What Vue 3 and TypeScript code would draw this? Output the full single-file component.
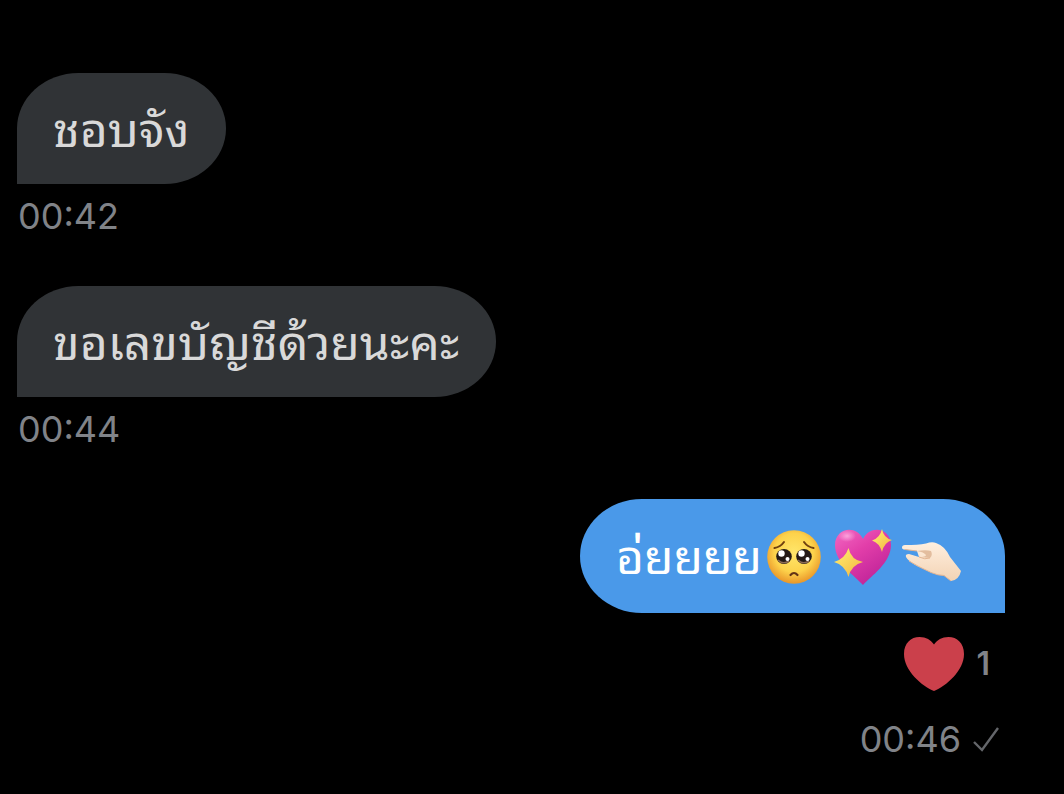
<script setup lang="ts">
interface Message {
  id: number
  text: string
  time: string
  own: boolean
  likes?: number
}

const messages: Message[] = [
  { id: 1, text: 'ชอบจัง', time: '00:42', own: false },
  { id: 2, text: 'ขอเลขบัญชีด้วยนะคะ', time: '00:44', own: false },
  { id: 3, text: 'อ่ยยยย', time: '00:46', own: true, likes: 1 },
]
</script>

<template>
  <main class="chat">
    <article v-for="m in messages" :key="m.id" class="message" :class="{ own: m.own }">
      <div class="bubble">
        <span class="text">{{ m.text }}</span>
        <span v-if="m.own" class="emojis">
          <svg class="emoji" viewBox="0 0 60 60" role="img" aria-label="Pleading face">
            <defs>
              <radialGradient id="skin" cx=".5" cy=".42" r=".56">
                <stop offset="0" stop-color="#ffe66a" />
                <stop offset=".65" stop-color="#fdd24b" />
                <stop offset="1" stop-color="#eb9b2c" />
              </radialGradient>
            </defs>
            <circle cx="30" cy="30" r="26.8" fill="url(#skin)" />
            <ellipse cx="20" cy="29.5" rx="7.8" ry="7.6" fill="#241a17" />
            <ellipse cx="40" cy="29.5" rx="7.8" ry="7.6" fill="#241a17" />
            <path d="M14 33q5 5 11 1M34 33q5 5 11 1" fill="none" stroke="#8c6b55" stroke-width="1.6" />
            <g fill="#fff">
              <circle cx="17.5" cy="26.5" r="3.2" /><circle cx="37.5" cy="26.5" r="3.2" />
              <circle cx="23.5" cy="32" r="2" /><circle cx="43.5" cy="32" r="2" />
            </g>
            <path d="M10.500 21q6-1 9.500-6M49.500 21q-6-1-9.500-6" fill="none" stroke="#70400f" stroke-width="2" stroke-linecap="round" />
            <path d="M26.500 48q3.500-4 7 0" fill="none" stroke="#633316" stroke-width="2.200" stroke-linecap="round" />
          </svg>
          <svg class="emoji" viewBox="0 0 60 60" role="img" aria-label="Sparkling heart">
            <defs>
              <linearGradient id="pink" x1="0" y1="0" x2=".7" y2="1">
                <stop offset="0" stop-color="#f269c3" />
                <stop offset=".45" stop-color="#e23ea9" />
                <stop offset="1" stop-color="#bd2298" />
              </linearGradient>
              <radialGradient id="shine">
                <stop offset="0" stop-color="#ffb5e5" stop-opacity=".8" />
                <stop offset="1" stop-color="#ffb5e5" stop-opacity="0" />
              </radialGradient>
              <linearGradient id="gold" x1="0" y1="0" x2="1" y2="1">
                <stop offset="0" stop-color="#fff173" />
                <stop offset="1" stop-color="#f3b43e" />
              </linearGradient>
            </defs>
            <path d="M30 58C22 49 2 36 2 18C2 1 23-3 30 12C37-3 58 1 58 18C58 36 38 49 30 58Z" fill="url(#pink)" />
            <ellipse cx="14" cy="9" rx="9" ry="6" fill="url(#shine)" />
            <path d="M15.500 21Q18 33 30 35Q18 38 15.500 50Q12 38 1 35Q12 32 15.500 21Z" fill="url(#gold)" />
            <path d="M49 2Q50.500 11 59 13Q51 15.500 49 25Q46.500 16 39 13.500Q47 11 49 2Z" fill="url(#gold)" />
          </svg>
          <svg class="emoji" viewBox="0 0 60 60" role="img" aria-label="Pinching hand">
            <defs>
              <linearGradient id="hand" x1="0" y1="0" x2="0" y2="1">
                <stop offset="0" stop-color="#ffefdf" />
                <stop offset="1" stop-color="#f3d3b4" />
              </linearGradient>
            </defs>
            <path d="M3 18Q0 18 0 20.500Q0 22.500 3 22.500L15 24L17 30L7 27Q3 27 4 30Q6 34 15 39L29 45.500Q36 48.500 42 48.500L49 54Q57 53 59 44L48 30Q43 19 34 16Q30 14.500 24 16.500Q16 18 3 18Z" fill="url(#hand)" />
            <path d="M15 24Q24 22.500 29 24Q31 28 28 31L17 30Q24 30 24 28Q22 25 15 24Z" fill="#e3bd9e" />
            <path d="M3 22.500L15 24M17 30Q23 33 28 31M7 34Q15 39 29 45.500Q36 48.500 42 48.500L49 54" fill="none" stroke="#e3b593" stroke-width="1" />
          </svg>
        </span>
      </div>
      <button v-if="m.likes" class="reaction" type="button" aria-label="Heart reaction, 1">
        <svg class="heart" viewBox="0 0 60 54" aria-hidden="true">
          <path d="M30 54C18 49 0 34 0 17C0 6 7 0 15.500 0C22 0 27 3 30 7.500C33 3 38 0 44.500 0C53 0 60 6 60 17C60 34 42 49 30 54Z" fill="#cb404b" />
        </svg>
        <span>{{ m.likes }}</span>
      </button>
      <div class="meta">
        <time>{{ m.time }}</time>
        <svg v-if="m.own" class="check" viewBox="0 0 26 26" role="img" aria-label="Sent">
          <path d="M1 16L9 24L25 2" fill="none" stroke="#64666a" stroke-width="2.400" />
        </svg>
      </div>
    </article>
  </main>
</template>

<style>
body {
  margin: 0;
  background: #000;
}
</style>

<style scoped>
.chat {
  box-sizing: border-box;
  min-height: 100vh;
  padding: 73px 59px 24px 17px;
  display: flex;
  flex-direction: column;
  gap: 48px;
  background: #000;
  font-family: Inter, sans-serif;
}

.message {
  display: flex;
  flex-direction: column;
  align-items: flex-start;
}

.message.own {
  align-items: flex-end;
}

.bubble {
  box-sizing: border-box;
  min-height: 111px;
  padding: 20px 37px 18px 36px;
  display: flex;
  align-items: center;
  border-radius: 62px 62px 62px 0 / 56px 56px 56px 0;
  background: #303336;
  color: #d9d9d9;
  font-family: "Noto Sans Thai Looped", Loma, Waree, Garuda, "Noto Serif Thai", Norasi, Kinnari, "Liberation Serif", serif;
  font-size: 48px;
  font-weight: 450;
  line-height: 64px;
}

.text {
  padding-bottom: 8px;
}

.own .bubble {
  min-height: 114px;
  padding-right: 43px;
  border-radius: 62px 62px 0 62px / 57px 57px 0 57px;
  background: #4a99e9;
  color: #fff;
}

.emojis {
  display: flex;
  gap: 9px;
  margin-left: 2px;
}

.emoji {
  width: 60px;
  height: 60px;
}

.meta {
  display: flex;
  align-items: center;
  gap: 12px;
  margin-top: 10px;
  padding-left: 1px;
  color: #808388;
  font-size: 36px;
  line-height: 44px;
}

.own .meta {
  padding-right: 6px;
  margin-top: 26px;
}

.check {
  width: 26px;
  height: 26px;
}

.reaction {
  display: flex;
  align-items: center;
  gap: 12px;
  margin: 24px 15px 0 0;
  padding: 0;
  border: 0;
  background: none;
  color: #808388;
  font: 600 32px/54px Inter, sans-serif;
}

.heart {
  width: 60px;
  height: 54px;
}
</style>
